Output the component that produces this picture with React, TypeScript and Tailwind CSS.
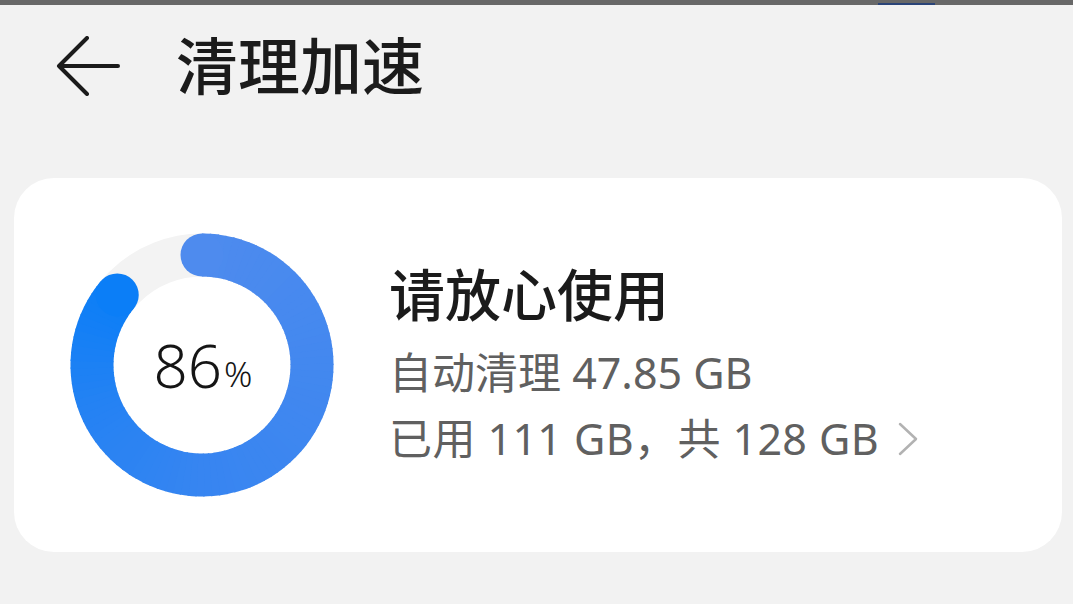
import React from "react";

const FONT = { fontFamily: '"Noto Sans", "Noto Sans CJK SC", sans-serif' };

// colour stops along the ring, by degrees clockwise from 12 o'clock
const STOPS: [number, [number, number, number]][] = [
  [0, [0x4e, 0x8b, 0xee]],
  [90, [0x43, 0x88, 0xef]],
  [180, [0x37, 0x85, 0xf1]],
  [250, [0x24, 0x82, 0xf3]],
  [310, [0x0b, 0x7e, 0xf7]],
];

function colorAt(deg: number) {
  for (let i = 0; i < STOPS.length - 1; i++) {
    const [a, ca] = STOPS[i];
    const [b, cb] = STOPS[i + 1];
    if (deg <= b) {
      const t = Math.max(0, (deg - a) / (b - a));
      const c = ca.map((v, k) => Math.round(v + (cb[k] - v) * t));
      return `rgb(${c[0]},${c[1]},${c[2]})`;
    }
  }
  const c = STOPS[STOPS.length - 1][1];
  return `rgb(${c[0]},${c[1]},${c[2]})`;
}

function pt(deg: number, r: number) {
  const rad = ((deg - 90) * Math.PI) / 180;
  return [132 + r * Math.cos(rad), 132 + r * Math.sin(rad)];
}

function UsageRing({ percent }: { percent: number }) {
  const r = 110;
  const sweep = (percent / 100) * 360;
  const n = 90;
  const segs = Array.from({ length: n }, (_, i) => {
    const a0 = (sweep * i) / n;
    const a1 = Math.min(sweep, (sweep * (i + 1)) / n + 0.6);
    const [x0, y0] = pt(a0, r);
    const [x1, y1] = pt(a1, r);
    return { d: `M${x0} ${y0} A${r} ${r} 0 0 1 ${x1} ${y1}`, color: colorAt((a0 + a1) / 2) };
  });
  const [sx, sy] = pt(0, r);
  const [ex, ey] = pt(sweep, r);
  return (
    <div className="relative w-[264px] h-[264px] shrink-0">
      <svg width="264" height="264" viewBox="0 0 264 264" className="block">
        <circle cx="132" cy="132" r={r} fill="none" stroke="#f3f3f3" strokeWidth="43" />
        {segs.map((s, i) => (
          <path key={i} d={s.d} fill="none" stroke={s.color} strokeWidth="43" />
        ))}
        <circle cx={sx} cy={sy} r="21.5" fill={colorAt(0)} />
        <circle cx={ex} cy={ey} r="21.5" fill={colorAt(sweep)} />
      </svg>
      <div className="absolute inset-0 flex items-center justify-center pl-[2px]">
        <span className="text-[60px] leading-none font-light text-[#151515]">{percent}</span>
        <span className="text-[35px] leading-none font-light text-[#151515] mt-[16px] ml-[2px]">%</span>
      </div>
    </div>
  );
}

export default function App() {
  return (
    <div className="w-[1073px] h-[604px] bg-[#f2f2f2] overflow-hidden" style={FONT}>
      {/* status strip */}
      <div className="relative h-[5px] bg-[#686868]">
        <div className="absolute left-[878px] bottom-0 h-[2px] w-[57px] bg-[#2a4478]" />
      </div>

      {/* header */}
      <div className="flex h-[70px] mt-[23px]">
        <svg width="64" height="60" viewBox="0 0 64 60" className="ml-[56px] mt-[8px] shrink-0">
          <path
            d="M31 2 L3 30 L31 58 M3 30 H62"
            fill="none"
            stroke="#1b1b1b"
            strokeWidth="4"
            strokeLinecap="round"
            strokeLinejoin="round"
          />
        </svg>
        <h1 className="ml-[56px] mt-[3px] text-[62px] leading-[70px] font-medium text-[#1b1b1b]">清理加速</h1>
      </div>

      {/* storage card */}
      <div className="ml-[14px] mr-[11px] mt-[80px] h-[374px] rounded-[40px] bg-white flex">
        <div className="ml-[56px] mt-[55px]">
          <UsageRing percent={86} />
        </div>
        <div className="ml-[55px] mt-[86px] flex flex-col">
          <div className="text-[56px] leading-[60px] font-medium text-[#1b1b1b]">请放心使用</div>
          <div className="mt-[24px] text-[43px] leading-[50px] text-[#606060]">自动清理 47.85 GB</div>
          <div className="mt-[16px] flex items-center text-[43px] leading-[50px] text-[#606060]">
            <span className="tracking-[0.4px]">已用 111 GB，共 128 GB</span>
            <svg width="22" height="34" viewBox="0 0 22 34" className="ml-[18px] shrink-0">
              <path d="M3 2 L19 17 L3 32" fill="none" stroke="#b2b2b2" strokeWidth="2.5" strokeLinecap="round" strokeLinejoin="round" />
            </svg>
          </div>
        </div>
      </div>
    </div>
  );
}
